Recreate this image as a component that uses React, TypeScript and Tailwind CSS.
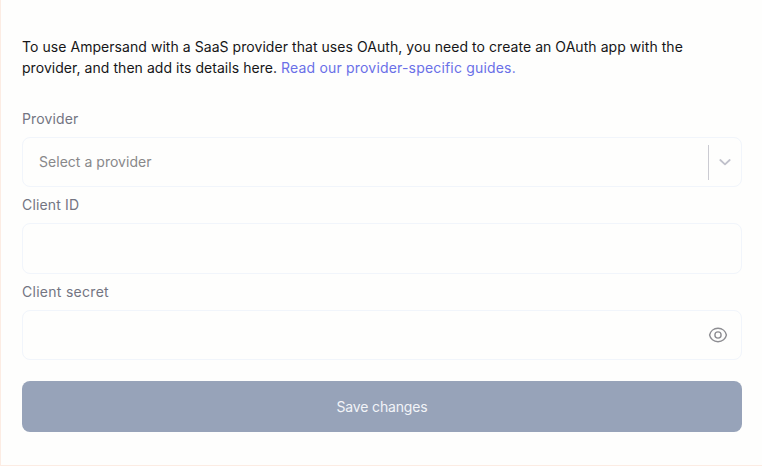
import React from "react";

function Field({ label, labelClass, children }: { label: string; labelClass: string; children?: React.ReactNode }) {
  return (
    <div className="flex flex-col">
      <label className="h-9 pt-1.5 text-[14px] leading-6 text-[#737582]">
        <span className={labelClass}>{label}</span>
      </label>
      <div className="flex h-[50.3px] items-center rounded-lg border border-[#f1f5fb]">{children}</div>
    </div>
  );
}

export default function App() {
  return (
    <main className="h-[466px] w-[762px] border-b border-l border-[#fcece3] bg-[#fefefd] pt-9 pr-5 pl-[21px] font-[Inter,'Open_Sans',sans-serif]">
      <p className="h-[65px] text-[14px] leading-[21.4px] whitespace-nowrap text-[#161618]">
        <span className="tracking-[0.053px]">To use Ampersand with a SaaS provider that uses OAuth, you need to create an OAuth app with the</span>
        <br />
        <span className="tracking-[0.05px]">provider, and then add its details here. </span>
        <a href="#" className="tracking-[0.18px] text-[#6a70e8]">Read our provider-specific guides.</a>
      </p>
      <form>
        <Field label="Provider" labelClass="tracking-[0.12px]">
          <span className="flex-1 pb-0.5 pl-4 text-[14px] tracking-[0.03px] text-[#88888a]">Select a provider</span>
          <span className="h-[35px] w-px bg-[#cbcbd2]" />
          <span className="flex w-8 justify-center">
            <svg className="h-[18px] w-[18px] fill-none stroke-[#c0c1cb] stroke-[1.8]" viewBox="0 0 18 18">
              <path d="M4.300 7L9 11.300L13.700 7" strokeLinecap="round" strokeLinejoin="round" />
            </svg>
          </span>
        </Field>
        <Field label="Client ID" labelClass="tracking-[0.15px]" />
        <Field label="Client secret" labelClass="tracking-[0.28px]">
          <svg className="mr-[13px] ml-auto h-[18px] w-5 fill-none stroke-[#8d8d92] stroke-[1.4]" viewBox="0 0 20 18">
            <path d="M1.600 9C2.400 5.200 5.600 2.300 10 2.300S17.600 5.200 18.400 9C17.600 12.800 14.400 15.700 10 15.700S2.400 12.800 1.600 9Z" />
            <circle cx="10" cy="9" r="3.100" />
          </svg>
        </Field>
        <button type="button" className="mt-[21.400px] flex h-[50.4px] w-full items-center justify-center rounded-lg bg-[#97a3b9] text-[14px] text-[#f2f4f8]">
          <span className="tracking-[-0.15px]">Save changes</span>
        </button>
      </form>
    </main>
  );
}
